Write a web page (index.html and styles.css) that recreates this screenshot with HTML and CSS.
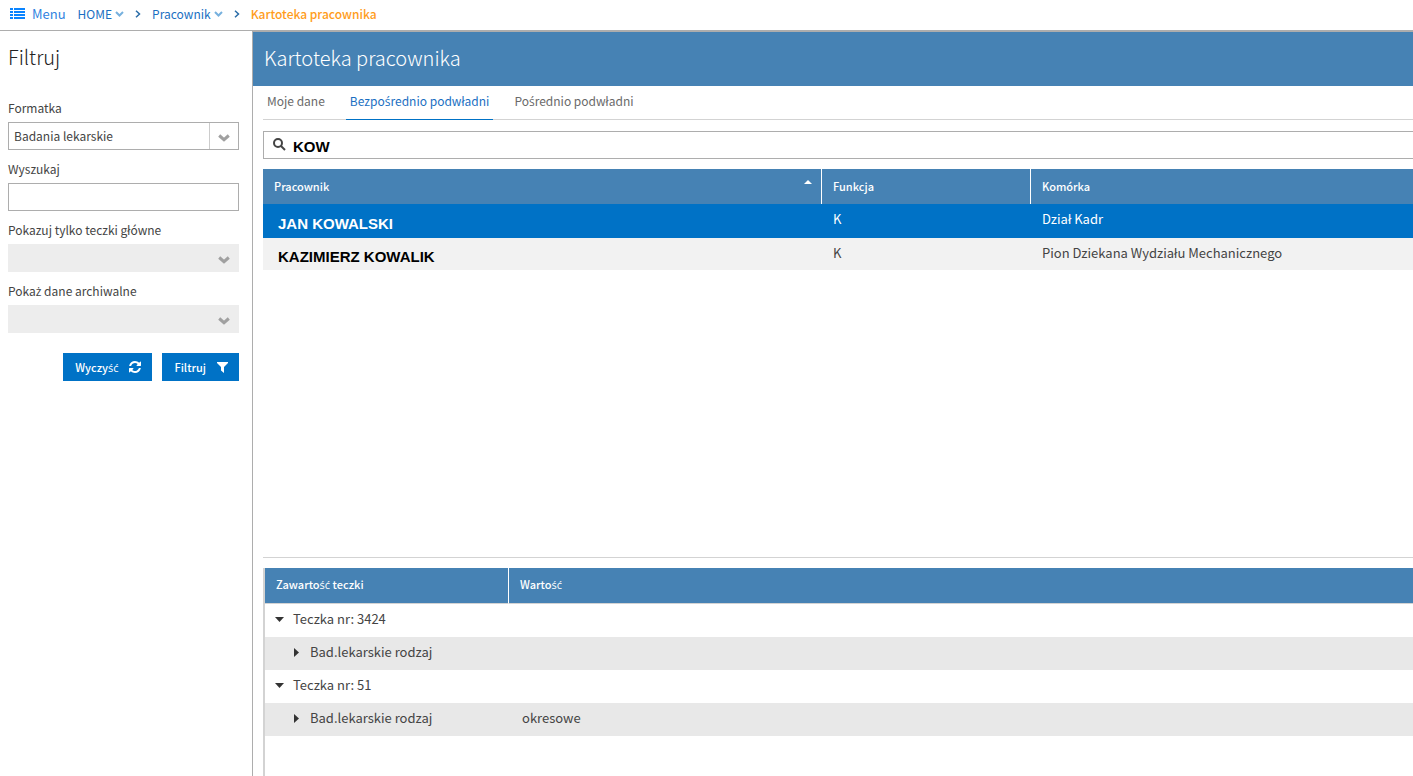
FILE: index.html
```html
<!DOCTYPE html>
<html lang="pl">
<head>
<meta charset="utf-8">
<meta name="viewport" content="width=device-width, initial-scale=1">
<title>Kartoteka pracownika</title>
<link rel="stylesheet" href="styles.css">
</head>
<body>
<div class="app">
  <nav class="topbar" aria-label="Nawigacja">
    <button class="menu-button" type="button">
      <svg class="menu-icon" width="15" height="12" viewBox="0 0 15 12" aria-hidden="true"><path d="M0 0h3v2H0zM4 0h11v2H4zM0 3h3v2H0zM4 3h11v2H4zM0 6h3v2H0zM4 6h11v2H4zM0 9h3v2H0zM4 9h11v2H4z"/></svg>
      <span>Menu</span>
    </button>
    <ol class="crumbs">
      <li class="crumb"><a href="#home">HOME</a><svg class="crumb-caret" width="9" height="6" viewBox="0 0 9 6" aria-hidden="true"><path d="M1 1l3.500 3.500L8 1"/></svg></li>
      <li class="crumb"><svg class="crumb-sep" width="6" height="8" viewBox="0 0 6 8" aria-hidden="true"><path d="M1 .7L4.500 4 1 7.300"/></svg><a href="#pracownik">Pracownik</a><svg class="crumb-caret" width="9" height="6" viewBox="0 0 9 6" aria-hidden="true"><path d="M1 1l3.500 3.500L8 1"/></svg></li>
      <li class="crumb"><svg class="crumb-sep" width="6" height="8" viewBox="0 0 6 8" aria-hidden="true"><path d="M1 .7L4.500 4 1 7.300"/></svg><span class="crumb-current" aria-current="page">Kartoteka pracownika</span></li>
    </ol>
  </nav>
  <div class="layout">
    <aside class="sidebar">
      <h2 class="sidebar-title">Filtruj</h2>
      <form class="filters">
        <div class="field">
          <label for="formatka">Formatka</label>
          <div class="select-box">
            <select id="formatka"><option>Badania lekarskie</option></select>
            <span class="select-arrow"><svg width="12" height="8" viewBox="0 0 12 8" aria-hidden="true"><path d="M1.200 1.500L6 5.700l4.800-4.200"/></svg></span>
          </div>
        </div>
        <div class="field">
          <label for="wyszukaj">Wyszukaj</label>
          <input class="text-box" id="wyszukaj" type="text">
        </div>
        <div class="field">
          <label for="glowne">Pokazuj tylko teczki główne</label>
          <div class="select-box select-box-muted">
            <select id="glowne"><option></option></select>
            <span class="select-arrow"><svg width="12" height="8" viewBox="0 0 12 8" aria-hidden="true"><path d="M1.200 1.500L6 5.700l4.800-4.200"/></svg></span>
          </div>
        </div>
        <div class="field">
          <label for="archiwalne">Poka<span class="accented">ż</span> dane archiwalne</label>
          <div class="select-box select-box-muted">
            <select id="archiwalne"><option></option></select>
            <span class="select-arrow"><svg width="12" height="8" viewBox="0 0 12 8" aria-hidden="true"><path d="M1.200 1.500L6 5.700l4.800-4.200"/></svg></span>
          </div>
        </div>
        <div class="actions">
          <button class="action" type="reset"><span>Wyczy<span class="accented">ść</span></span>
            <svg width="12" height="12" viewBox="0 0 1536 1536" aria-hidden="true"><path d="M1511 928q0 5-1 7-64 268-268 434.500T764 1536q-146 0-282.500-55T238 1324l-129 129q-19 19-45 19t-45-19-19-45V960q0-26 19-45t45-19h448q26 0 45 19t19 45-19 45l-137 137q71 66 161 102t187 36q134 0 250-65t186-179q11-17 53-117 8-23 30-23h192q13 0 22.500 9.500t9.500 22.500zM1536 128v448q0 26-19 45t-45 19h-448q-26 0-45-19t-19-45 19-45l138-138Q969 256 768 256q-134 0-250 65T332 500q-11 17-53 117-8 23-30 23H50q-13 0-22.500-9.500T18 608v-7q65-268 270-434.500T768 0q146 0 284 55.500T1297 212l130-129q19-19 45-19t45 19 19 45z"/></svg>
          </button>
          <button class="action" type="submit"><span>Filtruj</span>
            <svg width="11" height="12" viewBox="0 0 11 12" aria-hidden="true"><path d="M0 1h11v1L7 6v6L4 9.500V6L0 2z"/></svg>
          </button>
        </div>
      </form>
    </aside>
    <main class="main">
      <h1 class="page-title">Kartoteka pracownika</h1>
      <div class="content">
        <div class="tabs" role="tablist">
          <button class="tab" type="button" role="tab" aria-selected="false">Moje dane</button>
          <button class="tab tab-active" type="button" role="tab" aria-selected="true">Bezpo<span class="accented">ś</span>rednio podwładni</button>
          <button class="tab" type="button" role="tab" aria-selected="false">Po<span class="accented">ś</span>rednio podwładni</button>
        </div>
        <div class="search">
          <svg width="13" height="13" viewBox="0 0 13 13" aria-hidden="true"><circle cx="5" cy="5" r="4"/><path d="M8 8l4 4"/></svg>
          <input type="search" value="KOW" aria-label="Szukaj pracownika">
        </div>
        <div class="people-panel">
          <table class="grid">
            <colgroup><col class="col-person"><col class="col-function"><col></colgroup>
            <thead>
              <tr>
                <th scope="col" aria-sort="ascending"><span class="sort-head">Pracownik<svg width="8" height="4" viewBox="0 0 8 4" aria-hidden="true"><path d="M0 4L4 0l4 4z"/></svg></span></th>
                <th scope="col">Funkcja</th>
                <th scope="col">Komórka</th>
              </tr>
            </thead>
            <tbody>
              <tr class="row-selected"><td class="person">JAN KOWALSKI</td><td>K</td><td>Dział Kadr</td></tr>
              <tr class="row-even"><td class="person">KAZIMIERZ KOWALIK</td><td>K</td><td>Pion Dziekana Wydziału Mechanicznego</td></tr>
            </tbody>
          </table>
        </div>
        <div class="folder-panel">
          <table class="grid tree">
            <colgroup><col class="col-folder"><col></colgroup>
            <thead><tr><th scope="col">Zawarto<span class="accented">ść</span> teczki</th><th scope="col">Warto<span class="accented">ść</span></th></tr></thead>
            <tbody>
              <tr><td><button class="node" type="button" aria-expanded="true"><svg width="9" height="9" viewBox="0 0 9 9" aria-hidden="true"><path d="M0 2h9L4.500 7z"/></svg>Teczka nr: 3424</button></td><td></td></tr>
              <tr class="row-child"><td><button class="node node-child" type="button" aria-expanded="false"><svg width="9" height="9" viewBox="0 0 9 9" aria-hidden="true"><path d="M2 0v9l5-4.500z"/></svg>Bad.lekarskie rodzaj</button></td><td></td></tr>
              <tr><td><button class="node" type="button" aria-expanded="true"><svg width="9" height="9" viewBox="0 0 9 9" aria-hidden="true"><path d="M0 2h9L4.500 7z"/></svg>Teczka nr: 51</button></td><td></td></tr>
              <tr class="row-child"><td><button class="node node-child" type="button" aria-expanded="false"><svg width="9" height="9" viewBox="0 0 9 9" aria-hidden="true"><path d="M2 0v9l5-4.500z"/></svg>Bad.lekarskie rodzaj</button></td><td>okresowe</td></tr>
            </tbody>
          </table>
        </div>
      </div>
    </main>
  </div>
</div>
</body>
</html>
```
FILE: styles.css
```css
* { box-sizing: border-box; }

body {
  margin: 0;
  background: #fff;
  color: #444;
  font-family: "Noto Sans CJK SC", "Noto Sans", sans-serif;
  font-size: 12px;
  line-height: 16px;
}

button, input, select { font: inherit; color: inherit; border-radius: 0; }
button { margin: 0; padding: 0; border: 0; background: none; cursor: pointer; }
svg { flex: none; }
a { color: inherit; text-decoration: none; }

/* Polish letters that the base family has no glyph for */
.accented { font-family: "Open Sans", "Noto Sans", sans-serif; line-height: 1; }

.app { display: flex; flex-direction: column; min-height: 100vh; }

/* Top navigation */
.topbar {
  display: flex;
  align-items: center;
  gap: 12px;
  height: 31px;
  padding: 0 10px 3px;
  border-bottom: 1px solid #adadad;
}
.menu-button { display: flex; align-items: center; gap: 7px; color: #2f83e0; font-size: 13px; }
.menu-icon { fill: #0a84ff; }
.crumbs { display: flex; gap: 11px; margin: 0; padding: 0; list-style: none; color: #1b6fc2; }
.crumb { display: flex; align-items: center; }
.crumb-caret { margin-left: 3px; fill: none; stroke: #77b1de; stroke-width: 2; }
.crumb-sep { margin-right: 11px; fill: none; stroke: #2b6da8; stroke-width: 1.5; }
.crumb-current { color: #ff9d1c; font-weight: 500; }

.layout { display: flex; flex: 1; }

/* Filter sidebar */
.sidebar { flex: none; width: 253px; padding: 12px 13px 0 8px; border-right: 1px solid #adadad; }
.sidebar-title { margin: 0 0 28px; color: #222; font-size: 20px; font-weight: 300; line-height: 28px; }
.filters { display: flex; flex-direction: column; gap: 10px; }
.field { display: flex; flex-direction: column; gap: 6px; }
.field label { line-height: 17px; }
.select-box { display: grid; grid-template-columns: 1fr 29px; height: 28px; border: 1px solid #adadad; }
.select-box select {
  grid-area: 1 / 1 / 2 / 3;
  width: 100%;
  height: 100%;
  padding: 0 29px 0 5px;
  border: 0;
  background: transparent;
  appearance: none;
}
.select-arrow {
  display: flex;
  grid-area: 1 / 2;
  align-items: center;
  justify-content: center;
  padding-top: 3px;
  border-left: 1px solid #ccc;
  pointer-events: none;
}
.select-arrow svg { fill: none; stroke: #a0a0a0; stroke-width: 3; }
.select-box-muted { border-color: #ededed; background: #ededed; }
.select-box-muted .select-arrow { border-color: transparent; }
.text-box { width: 100%; height: 28px; padding: 0 6px; border: 1px solid #adadad; background: #fff; }
.actions { display: flex; justify-content: flex-end; gap: 10px; padding-top: 10px; }
.action {
  display: flex;
  align-items: center;
  gap: 11px;
  height: 28px;
  padding: 0 11px 0 12px;
  background: #0072c6;
  color: #fff;
  font-size: 11px;
  font-weight: 500;
}
.action svg { fill: #fff; }

/* Employee record */
.main { display: flex; flex: 1; flex-direction: column; min-width: 0; }
.page-title {
  margin: 0;
  padding: 12px 11px 14px;
  border-top: 1px solid #adadad;
  background: #4682b4;
  color: #fff;
  font-size: 20px;
  font-weight: 300;
  line-height: 28px;
}
.content { display: flex; flex: 1; flex-direction: column; padding-left: 10px; }
.tabs { display: flex; gap: 17px; height: 34px; border-bottom: 1px solid #d3d3d3; }
.tab { height: 34px; padding: 0 4px 4px; border-bottom: 1px solid transparent; color: #6a6a6a; }
.tab-active { border-color: #0072c6; color: #1b6fc2; }
.search {
  display: flex;
  align-items: center;
  gap: 7px;
  height: 28px;
  margin-top: 11px;
  padding-left: 9px;
  border: 1px solid #adadad;
  border-right: 0;
}
.search svg { margin-bottom: 2px; fill: none; stroke: #444; stroke-width: 2; }
.search input {
  flex: 1;
  min-width: 0;
  height: 26px;
  padding: 3px 0 0;
  border: 0;
  outline: 0;
  background: transparent;
  color: #000;
  font: bold 15px "Liberation Sans", Arial, sans-serif;
  appearance: none;
}

.people-panel { height: 389px; margin-top: 10px; border-bottom: 1px solid #d3d3d3; }
.grid { width: 100%; border-collapse: separate; border-spacing: 0; table-layout: fixed; }
.col-person { width: 559px; }
.col-function { width: 209px; }
.col-folder { width: 244px; }
.grid th {
  height: 35px;
  padding: 0 11px 2px;
  border-right: 1px solid #fff;
  background: #4682b4;
  color: #fff;
  font-size: 11px;
  font-weight: 500;
  text-align: left;
}
.grid th:last-child { border-right: 0; }
.grid td { height: 33px; padding: 0 11px 3px; font-size: 13px; }
.sort-head { display: flex; justify-content: space-between; }
.sort-head svg { margin: 2px -2px 0 0; fill: #fff; }
.grid .person {
  padding: 5px 15px 0;
  color: #000;
  font: bold 15px "Liberation Sans", Arial, sans-serif;
}
.row-selected td, .grid .row-selected .person { background: #0072c6; color: #fff; }
.row-selected td { border-bottom: 1px solid #0072c6; }
.grid .row-selected td { height: 34px; }
.grid .row-even td { height: 32px; background: #f2f2f2; }

.folder-panel { flex: 1; margin-top: 10px; border-left: 2px solid #d3d3d3; }
.tree th { height: 36px; padding: 0 11px 3px; border-bottom: 1px solid #d3d3d3; }
.tree td { padding: 0 13px 3px; }
.tree td:first-child { padding: 0 10px 3px; }
.row-child td { background: #e8e8e8; }
.node { display: flex; align-items: center; gap: 9px; }
.node svg { fill: #333; }
.node-child { margin-left: 17px; }
```
